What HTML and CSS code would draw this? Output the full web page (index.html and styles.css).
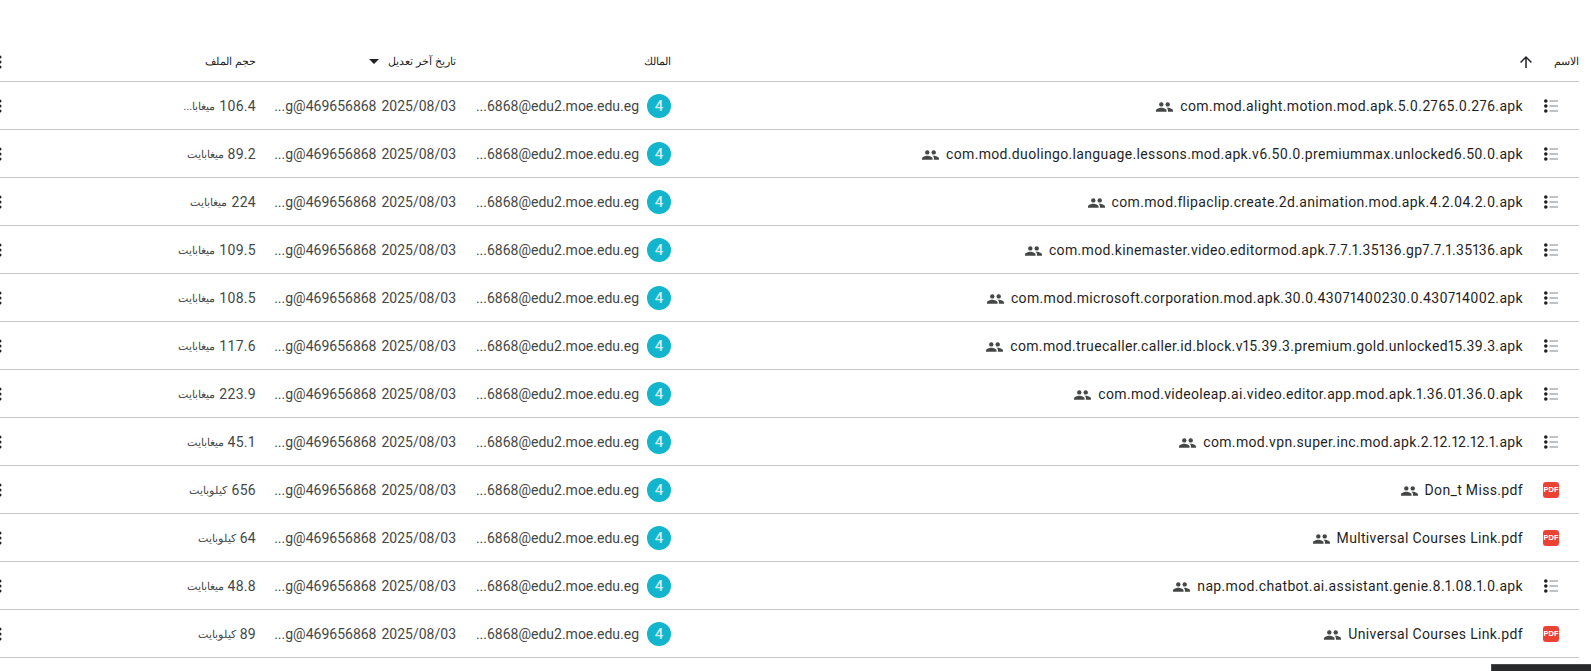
FILE: index.html
```html
<!DOCTYPE html>
<html lang="ar" dir="rtl">
<head>
<meta charset="utf-8">
<title>الملفات</title>
<link rel="stylesheet" href="styles.css">
</head>
<body>
<svg class="defs" width="0" height="0" aria-hidden="true">
  <symbol id="list" viewBox="0 0 16 16">
    <circle cx="2.8" cy="3" r="1.8" fill="#202124"/><circle cx="2.8" cy="8" r="1.8" fill="#202124"/><circle cx="2.8" cy="13" r="1.8" fill="#202124"/>
    <path d="M6.5 3h8.5M6.5 8h8.5M6.5 13h8.5" stroke="#80868b" stroke-width="1.2" fill="none"/>
  </symbol>
  <symbol id="people" viewBox="0 0 18 10">
    <circle cx="5.6" cy="2.3" r="2.3" fill="#444746"/><circle cx="12.4" cy="2.3" r="2.3" fill="#444746"/>
    <path fill="#444746" d="M0 10V8.6c0-1.8 3.6-2.9 5.6-2.9s5.6 1.1 5.6 2.9V10zM12.4 5.7c1.9 0 5.6 1.1 5.6 2.9V10h-5.4V8.4c0-1-.6-1.8-1.6-2.5.5-.1 1-.2 1.4-.2z"/>
  </symbol>
  <symbol id="kebab" viewBox="0 0 4 16">
    <circle cx="2" cy="3" r="1.5" fill="#202124"/><circle cx="2" cy="8" r="1.5" fill="#202124"/><circle cx="2" cy="13" r="1.5" fill="#202124"/>
  </symbol>
</svg>
<main class="table">
  <div class="row head">
    <div class="c-name"><span class="head-label">الاسم</span><svg class="sort-arrow" viewBox="0 0 24 24"><path fill="#202124" d="M4 12l1.41 1.41L11 7.83V20h2V7.83l5.58 5.59L20 12l-8-8-8 8z"/></svg></div>
    <div class="c-owner"><span class="head-label">المالك</span></div>
    <div class="c-date"><span class="head-label">تاريخ آخر تعديل</span><span class="caret"></span></div>
    <div class="c-size"><span class="head-label">حجم الملف</span></div>
    <div class="c-more"><svg class="kebab"><use href="#kebab"/></svg></div>
  </div>
  <div class="row"><div class="c-name"><svg class="ficon"><use href="#list"/></svg><span class="fname" dir="ltr">com.mod.alight.motion.mod.apk.5.0.2765.0.276.apk</span><svg class="shared"><use href="#people"/></svg></div><div class="c-owner"><span class="avatar">4</span><span class="email" dir="ltr">...6868@edu2.moe.edu.eg</span></div><div class="c-date"><span class="date" dir="ltr">2025/08/03</span><span class="mod" dir="ltr">...g@469656868</span></div><div class="c-size"><span class="num">106.4</span> <span class="unit">ميغابا...</span></div><div class="c-more"><svg class="kebab"><use href="#kebab"/></svg></div></div>
  <div class="row"><div class="c-name"><svg class="ficon"><use href="#list"/></svg><span class="fname" dir="ltr">com.mod.duolingo.language.lessons.mod.apk.v6.50.0.premiummax.unlocked6.50.0.apk</span><svg class="shared"><use href="#people"/></svg></div><div class="c-owner"><span class="avatar">4</span><span class="email" dir="ltr">...6868@edu2.moe.edu.eg</span></div><div class="c-date"><span class="date" dir="ltr">2025/08/03</span><span class="mod" dir="ltr">...g@469656868</span></div><div class="c-size"><span class="num">89.2</span> <span class="unit">ميغابايت</span></div><div class="c-more"><svg class="kebab"><use href="#kebab"/></svg></div></div>
  <div class="row"><div class="c-name"><svg class="ficon"><use href="#list"/></svg><span class="fname" dir="ltr">com.mod.flipaclip.create.2d.animation.mod.apk.4.2.04.2.0.apk</span><svg class="shared"><use href="#people"/></svg></div><div class="c-owner"><span class="avatar">4</span><span class="email" dir="ltr">...6868@edu2.moe.edu.eg</span></div><div class="c-date"><span class="date" dir="ltr">2025/08/03</span><span class="mod" dir="ltr">...g@469656868</span></div><div class="c-size"><span class="num">224</span> <span class="unit">ميغابايت</span></div><div class="c-more"><svg class="kebab"><use href="#kebab"/></svg></div></div>
  <div class="row"><div class="c-name"><svg class="ficon"><use href="#list"/></svg><span class="fname" dir="ltr">com.mod.kinemaster.video.editormod.apk.7.7.1.35136.gp7.7.1.35136.apk</span><svg class="shared"><use href="#people"/></svg></div><div class="c-owner"><span class="avatar">4</span><span class="email" dir="ltr">...6868@edu2.moe.edu.eg</span></div><div class="c-date"><span class="date" dir="ltr">2025/08/03</span><span class="mod" dir="ltr">...g@469656868</span></div><div class="c-size"><span class="num">109.5</span> <span class="unit">ميغابايت</span></div><div class="c-more"><svg class="kebab"><use href="#kebab"/></svg></div></div>
  <div class="row"><div class="c-name"><svg class="ficon"><use href="#list"/></svg><span class="fname" dir="ltr">com.mod.microsoft.corporation.mod.apk.30.0.43071400230.0.430714002.apk</span><svg class="shared"><use href="#people"/></svg></div><div class="c-owner"><span class="avatar">4</span><span class="email" dir="ltr">...6868@edu2.moe.edu.eg</span></div><div class="c-date"><span class="date" dir="ltr">2025/08/03</span><span class="mod" dir="ltr">...g@469656868</span></div><div class="c-size"><span class="num">108.5</span> <span class="unit">ميغابايت</span></div><div class="c-more"><svg class="kebab"><use href="#kebab"/></svg></div></div>
  <div class="row"><div class="c-name"><svg class="ficon"><use href="#list"/></svg><span class="fname" dir="ltr">com.mod.truecaller.caller.id.block.v15.39.3.premium.gold.unlocked15.39.3.apk</span><svg class="shared"><use href="#people"/></svg></div><div class="c-owner"><span class="avatar">4</span><span class="email" dir="ltr">...6868@edu2.moe.edu.eg</span></div><div class="c-date"><span class="date" dir="ltr">2025/08/03</span><span class="mod" dir="ltr">...g@469656868</span></div><div class="c-size"><span class="num">117.6</span> <span class="unit">ميغابايت</span></div><div class="c-more"><svg class="kebab"><use href="#kebab"/></svg></div></div>
  <div class="row"><div class="c-name"><svg class="ficon"><use href="#list"/></svg><span class="fname" dir="ltr">com.mod.videoleap.ai.video.editor.app.mod.apk.1.36.01.36.0.apk</span><svg class="shared"><use href="#people"/></svg></div><div class="c-owner"><span class="avatar">4</span><span class="email" dir="ltr">...6868@edu2.moe.edu.eg</span></div><div class="c-date"><span class="date" dir="ltr">2025/08/03</span><span class="mod" dir="ltr">...g@469656868</span></div><div class="c-size"><span class="num">223.9</span> <span class="unit">ميغابايت</span></div><div class="c-more"><svg class="kebab"><use href="#kebab"/></svg></div></div>
  <div class="row"><div class="c-name"><svg class="ficon"><use href="#list"/></svg><span class="fname" dir="ltr">com.mod.vpn.super.inc.mod.apk.2.12.12.12.1.apk</span><svg class="shared"><use href="#people"/></svg></div><div class="c-owner"><span class="avatar">4</span><span class="email" dir="ltr">...6868@edu2.moe.edu.eg</span></div><div class="c-date"><span class="date" dir="ltr">2025/08/03</span><span class="mod" dir="ltr">...g@469656868</span></div><div class="c-size"><span class="num">45.1</span> <span class="unit">ميغابايت</span></div><div class="c-more"><svg class="kebab"><use href="#kebab"/></svg></div></div>
  <div class="row"><div class="c-name"><span class="pdf">PDF</span><span class="fname" dir="ltr">Don_t Miss.pdf</span><svg class="shared"><use href="#people"/></svg></div><div class="c-owner"><span class="avatar">4</span><span class="email" dir="ltr">...6868@edu2.moe.edu.eg</span></div><div class="c-date"><span class="date" dir="ltr">2025/08/03</span><span class="mod" dir="ltr">...g@469656868</span></div><div class="c-size"><span class="num">656</span> <span class="unit">كيلوبايت</span></div><div class="c-more"><svg class="kebab"><use href="#kebab"/></svg></div></div>
  <div class="row"><div class="c-name"><span class="pdf">PDF</span><span class="fname" dir="ltr">Multiversal Courses Link.pdf</span><svg class="shared"><use href="#people"/></svg></div><div class="c-owner"><span class="avatar">4</span><span class="email" dir="ltr">...6868@edu2.moe.edu.eg</span></div><div class="c-date"><span class="date" dir="ltr">2025/08/03</span><span class="mod" dir="ltr">...g@469656868</span></div><div class="c-size"><span class="num">64</span> <span class="unit">كيلوبايت</span></div><div class="c-more"><svg class="kebab"><use href="#kebab"/></svg></div></div>
  <div class="row"><div class="c-name"><svg class="ficon"><use href="#list"/></svg><span class="fname" dir="ltr">nap.mod.chatbot.ai.assistant.genie.8.1.08.1.0.apk</span><svg class="shared"><use href="#people"/></svg></div><div class="c-owner"><span class="avatar">4</span><span class="email" dir="ltr">...6868@edu2.moe.edu.eg</span></div><div class="c-date"><span class="date" dir="ltr">2025/08/03</span><span class="mod" dir="ltr">...g@469656868</span></div><div class="c-size"><span class="num">48.8</span> <span class="unit">ميغابايت</span></div><div class="c-more"><svg class="kebab"><use href="#kebab"/></svg></div></div>
  <div class="row"><div class="c-name"><span class="pdf">PDF</span><span class="fname" dir="ltr">Universal Courses Link.pdf</span><svg class="shared"><use href="#people"/></svg></div><div class="c-owner"><span class="avatar">4</span><span class="email" dir="ltr">...6868@edu2.moe.edu.eg</span></div><div class="c-date"><span class="date" dir="ltr">2025/08/03</span><span class="mod" dir="ltr">...g@469656868</span></div><div class="c-size"><span class="num">89</span> <span class="unit">كيلوبايت</span></div><div class="c-more"><svg class="kebab"><use href="#kebab"/></svg></div></div>
</main>
<div class="dark-bar"></div>
</body>
</html>
```

FILE: styles.css
```css
* { box-sizing: border-box; }
html, body { margin: 0; height: 671px; overflow: hidden; background: #fff; }
body { font-family: Roboto, "Noto Sans", "Liberation Sans", sans-serif; font-size: 14px; color: #1f1f1f; padding: 34px 12px 0 0; }
.defs { position: absolute; }
.table { width: 1579px; }
.row { display: flex; align-items: center; height: 48px; border-bottom: 1px solid #c7c7c7; padding-top: 1px; }
.head { padding-top: 8px; }
.c-name { flex: 1 1 auto; min-width: 0; display: flex; align-items: center; padding-inline-start: 20px; }
.head .c-name { padding-inline-start: 0; }
.c-owner { flex: 0 0 215px; display: flex; align-items: center; }
.c-date { flex: 0 0 200px; display: flex; align-items: center; }
.c-size { flex: 0 0 250px; display: flex; align-items: center; }
.c-more { flex: 0 0 8px; display: flex; align-items: center; justify-content: flex-end; margin-left: -2px; }
.head-label { font-family: "Liberation Sans", sans-serif; font-size: 11px; color: #1f1f1f; }
.sort-arrow { width: 18px; height: 18px; margin-inline-start: 19px; flex: none; }
.ficon { width: 16px; height: 16px; margin-inline-end: 20px; flex: none; }
.pdf { width: 16px; height: 16px; margin-inline-end: 20px; flex: none; background: #ea4335; border-radius: 3px; color: #fff; font: bold 7.5px/16px "Liberation Sans", sans-serif; text-align: center; }
.fname { letter-spacing: 0.34px; white-space: nowrap; color: #1f1f1f; font-variant-numeric: proportional-nums; }
.shared { width: 17px; height: 10px; margin-inline-start: 7px; margin-top: 2px; flex: none; }
.avatar { width: 24px; height: 24px; border-radius: 50%; background: #12b5cb; color: #cdeff4; font-size: 15px; font-weight: 500; line-height: 24px; text-align: center; flex: none; }
.email { margin-right: 8px; color: #444746; white-space: nowrap; }
.date { color: #444746; white-space: nowrap; }
.mod { margin-right: 5px; color: #444746; white-space: nowrap; }
.num { color: #444746; letter-spacing: 0.3px; }
.unit { font-family: "Liberation Sans", sans-serif; font-size: 11px; color: #444746; margin-inline-start: 4px; }
.caret { width: 0; height: 0; border-left: 5px solid transparent; border-right: 5px solid transparent; border-top: 5px solid #202124; margin-inline-start: 9px; }
.kebab { width: 4px; height: 16px; display: block; }
.dark-bar { position: absolute; left: 1491px; top: 664px; width: 100px; height: 7px; background: #28292b; border: 1px solid #4a4a4a; border-width: 1px 0 0 1px; }
```
